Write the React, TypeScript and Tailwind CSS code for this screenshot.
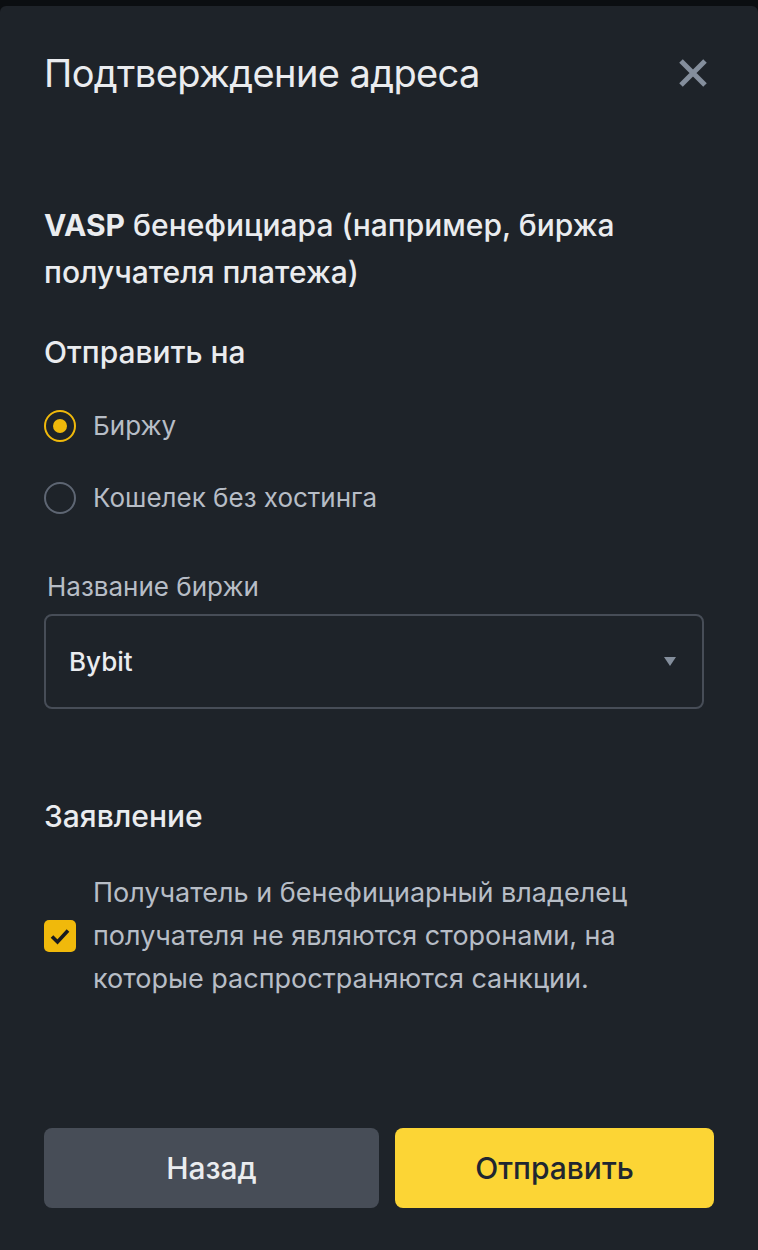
import { useState } from 'react';

const font = { fontFamily: 'Inter, "Liberation Sans", Arial, sans-serif' };

function Radio(props: { checked: boolean; label: string; onClick: () => void }) {
  const { checked, label, onClick } = props;
  return (
    <button type="button" onClick={onClick} className="flex items-center h-[40px] gap-[17px] text-left">
      <span
        className={`w-[32px] h-[32px] rounded-full border-2 flex items-center justify-center shrink-0 ${
          checked ? 'border-[#f0b90b]' : 'border-[#5e6673]'
        }`}
      >
        {checked && <span className="w-[14px] h-[14px] rounded-full bg-[#f0b90b]" />}
      </span>
      <span className="text-[26px] leading-[40px] text-[#b7bdc6]">{label}</span>
    </button>
  );
}

export default function App() {
  const [target, setTarget] = useState<'exchange' | 'wallet'>('exchange');
  const [agreed, setAgreed] = useState(true);

  return (
    <div className="bg-[#0b0e11] min-h-[1250px] pt-[6px]" style={font}>
      <div className="bg-[#1e2329] rounded-t-[6px] h-[1244px] flex flex-col px-[44px]">
        <div className="flex items-center justify-between mt-[43px] h-[48px]">
          <h1 className="text-[38px] leading-[48px] tracking-[-0.6px] text-[#eaecef] font-normal">Подтверждение адреса</h1>
          <button type="button" className="w-[30px] h-[30px] mr-[6px] flex items-center justify-center">
            <svg width="30" height="30" viewBox="0 0 30 30" fill="none">
              <path d="M3 3L27 27M27 3L3 27" stroke="#848e9c" strokeWidth="5" />
            </svg>
          </button>
        </div>

        <p className="mt-[105px] text-[30px] leading-[47px] text-[#eaecef] font-medium">
          <span className="font-bold">VASP</span> бенефициара (например, биржа получателя платежа)
        </p>

        <p className="mt-[36px] text-[30px] leading-[40px] text-[#eaecef] font-medium">Отправить на</p>

        <div className="mt-[34px] flex flex-col gap-[32px]">
          <Radio checked={target === 'exchange'} label="Биржу" onClick={() => setTarget('exchange')} />
          <Radio checked={target === 'wallet'} label="Кошелек без хостинга" onClick={() => setTarget('wallet')} />
        </div>

        <p className="mt-[51px] pl-[3px] text-[26px] leading-[36px] text-[#b7bdc6]">Название биржи</p>

        <div className="mt-[9px] w-[660px] h-[95px] border-2 border-[#474d57] rounded-[8px] flex items-center justify-between pl-[23px] pr-[26px]">
          <span className="text-[26px] text-[#eaecef] font-medium">Bybit</span>
          <svg width="12" height="9" viewBox="0 0 12 9">
            <path d="M0 0H12L6 9Z" fill="#848e9c" />
          </svg>
        </div>

        <p className="mt-[87px] text-[30px] leading-[40px] text-[#eaecef] font-medium">Заявление</p>

        <div className="mt-[35px] flex items-center gap-[17px]">
          <button
            type="button"
            onClick={() => setAgreed(!agreed)}
            className={`w-[32px] h-[32px] rounded-[5px] flex items-center justify-center shrink-0 ${
              agreed ? 'bg-[#f0b90b]' : 'border-2 border-[#5e6673]'
            }`}
          >
            {agreed && (
              <svg width="22" height="18" viewBox="0 0 22 18" fill="none">
                <path d="M3 9.5L8.5 15L19 3.5" stroke="#181a20" strokeWidth="3.6" />
              </svg>
            )}
          </button>
          <p className="text-[27px] leading-[43px] text-[#b7bdc6]">
            Получатель и бенефициарный владелец получателя не являются сторонами, на которые распространяются санкции.
          </p>
        </div>

        <div className="mt-auto mb-[42px] flex gap-[16px]">
          <button type="button" className="w-[336px] h-[80px] rounded-[8px] bg-[#474d57] text-[30px] text-[#eaecef] font-medium">
            Назад
          </button>
          <button type="button" className="w-[320px] h-[80px] rounded-[8px] bg-[#fcd535] text-[30px] text-[#202630] font-medium">
            Отправить
          </button>
        </div>
      </div>
    </div>
  );
}
